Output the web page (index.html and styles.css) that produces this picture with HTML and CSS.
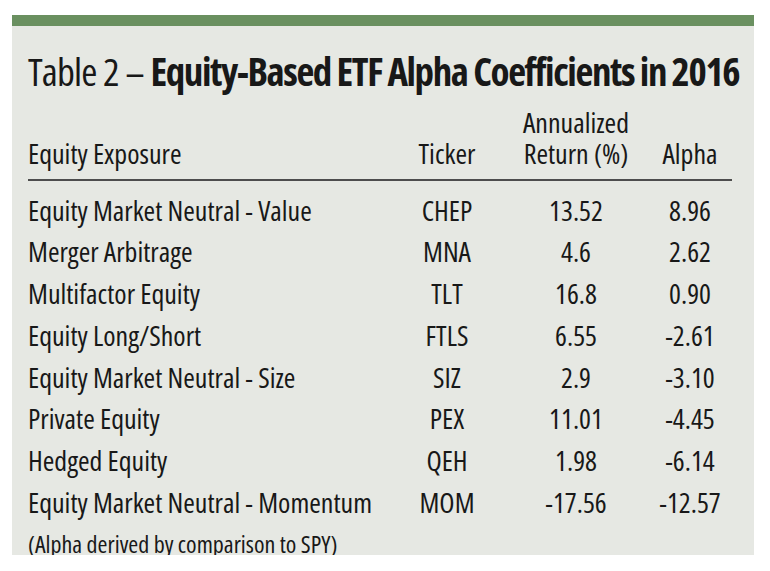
FILE: index.html
```html
<!DOCTYPE html>
<html lang="en">
<head>
<meta charset="utf-8">
<title>Table 2 – Equity-Based ETF Alpha Coefficients in 2016</title>
<link rel="stylesheet" href="styles.css">
</head>
<body>
<div class="panel">
  <h1 class="title">Table 2 – <b>Equity-Based ETF Alpha Coefficients in 2016</b></h1>
  <div class="table">
    <div class="head">
      <div class="cell first">Equity Exposure</div>
      <div class="cell">Ticker</div>
      <div class="cell">Annualized<br>Return (%)</div>
      <div class="cell">Alpha</div>
    </div>
    <div class="body">
      <div class="row"><div class="cell first">Equity Market Neutral - Value</div><div class="cell">CHEP</div><div class="cell">13.52</div><div class="cell">8.96</div></div>
      <div class="row"><div class="cell first">Merger Arbitrage</div><div class="cell">MNA</div><div class="cell">4.6</div><div class="cell">2.62</div></div>
      <div class="row"><div class="cell first">Multifactor Equity</div><div class="cell">TLT</div><div class="cell">16.8</div><div class="cell">0.90</div></div>
      <div class="row"><div class="cell first">Equity Long/Short</div><div class="cell">FTLS</div><div class="cell">6.55</div><div class="cell">-2.61</div></div>
      <div class="row"><div class="cell first">Equity Market Neutral - Size</div><div class="cell">SIZ</div><div class="cell">2.9</div><div class="cell">-3.10</div></div>
      <div class="row"><div class="cell first">Private Equity</div><div class="cell">PEX</div><div class="cell">11.01</div><div class="cell">-4.45</div></div>
      <div class="row"><div class="cell first">Hedged Equity</div><div class="cell">QEH</div><div class="cell">1.98</div><div class="cell">-6.14</div></div>
      <div class="row"><div class="cell first">Equity Market Neutral - Momentum</div><div class="cell">MOM</div><div class="cell">-17.56</div><div class="cell">-12.57</div></div>
    </div>
  </div>
  <p class="note">(Alpha derived by comparison to SPY)</p>
</div>
</body>
</html>
```

FILE: styles.css
```css
html, body {
  margin: 0;
  padding: 0;
  background: #ffffff;
}

body {
  font-family: "Open Sans", "Noto Sans", sans-serif;
  font-stretch: 75%;
  color: #181818;
}

.panel {
  box-sizing: border-box;
  width: 742px;
  height: 540px;
  margin: 15px 0 0 12px;
  background: #e6e8e3;
  border-top: 11px solid #6a9060;
  padding: 20px 22px 0 16px;
  overflow: hidden;
}

.title {
  margin: 0;
  font-size: 39px;
  line-height: 50px;
  letter-spacing: -0.8px;
  font-weight: 400;
  white-space: nowrap;
}

.title b {
  font-weight: 700;
  letter-spacing: -1.4px;
}

.table {
  margin-top: 11px;
}

.head,
.row {
  display: grid;
  grid-template-columns: 362px 114px 144px 84px;
}

.head {
  align-items: end;
  font-size: 28px;
  line-height: 31px;
  padding-bottom: 10.4px;
  border-bottom: 2px solid #4d4d4d;
}

.body {
  padding-top: 8.3px;
}

.row {
  font-size: 28px;
  line-height: 41.7px;
}

.cell {
  text-align: center;
  white-space: nowrap;
}

.cell.first {
  text-align: left;
}

.note {
  margin: 5.8px 0 0;
  font-size: 24px;
  line-height: 30px;
}
```
